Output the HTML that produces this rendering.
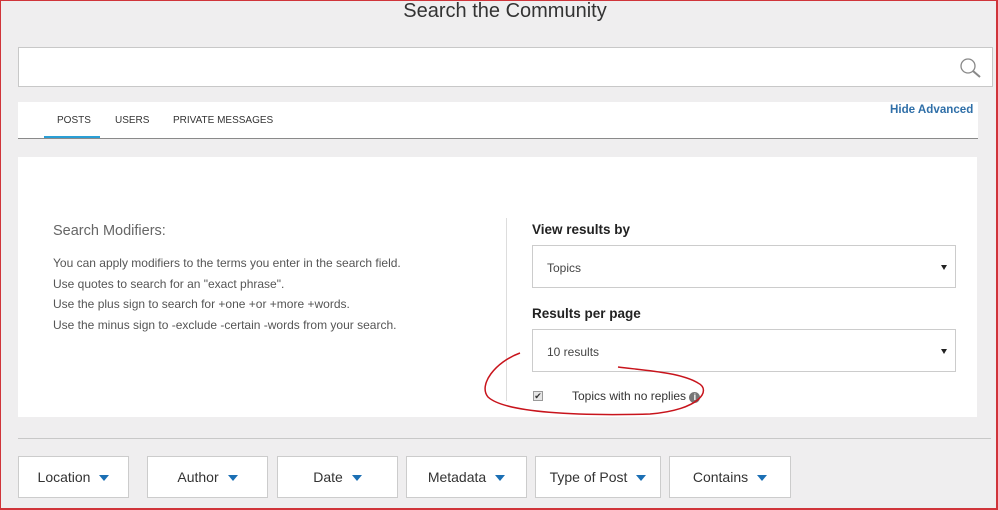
<!DOCTYPE html>
<html><head><style>
*{margin:0;padding:0;box-sizing:border-box}
body{width:998px;height:510px;background:#efeeef;font-family:"Liberation Sans",sans-serif;position:relative;overflow:hidden;color:#333}
.frame{position:absolute;left:0;top:0;width:998px;height:510px;border:1px solid #d0343a;border-bottom-width:2px;border-right-width:2px;z-index:5;pointer-events:none}
.abs{position:absolute}
h1{position:absolute;left:0;width:1010px;top:0;text-align:center;font-size:20px;font-weight:normal;color:#333}
.search{left:18px;top:47px;width:975px;height:40px;background:#fff;border:1px solid #c8c8c8}
.tabs{left:18px;top:102px;width:960px;height:37px;background:#fff;border-bottom:1px solid #8a8a8a}
.tab{position:absolute;top:13px;font-size:10px;color:#333}
.main{left:18px;top:157px;width:959px;height:260px;background:#fff}
.sel{position:absolute;left:514px;width:424px;height:43px;border:1px solid #ccc;font-size:12px;padding:15px 0 0 14px;color:#444}
.sel:after{content:"";position:absolute;right:8px;top:19px;border:3.5px solid transparent;border-top:5px solid #222}
.lbl{position:absolute;left:514px;font-size:13.5px;font-weight:bold;color:#222}
.btn{position:absolute;top:456px;height:42px;background:#fff;border:1px solid #ccc;font-size:14px;color:#333;text-align:center;line-height:40px}
.btn i{display:inline-block;margin-left:9px;border:5px solid transparent;border-top:6px solid #1b6fb4;vertical-align:-4px}
.mod{position:absolute;left:35px;font-size:12px;color:#555}
</style></head><body>
<div class="frame"></div>
<h1>Search the Community</h1>
<div class="abs search">
<svg class="abs" style="left:940px;top:9px" width="24" height="22" viewBox="0 0 24 22"><circle cx="9" cy="9" r="7" fill="none" stroke="#888" stroke-width="1.3"/><path d="M14 14 L21 20" stroke="#888" stroke-width="2"/></svg>
</div>
<div class="abs tabs">
<span class="tab" style="left:39px">POSTS</span>
<div class="abs" style="left:26px;top:34px;width:56px;height:2px;background:#2a9fd6"></div>
<span class="tab" style="left:97px">USERS</span>
<span class="tab" style="left:155px">PRIVATE MESSAGES</span>
<span class="abs" style="left:872px;top:1px;font-size:11.6px;font-weight:bold;color:#2f6fa8">Hide Advanced</span>
</div>
<div class="abs main">
<div class="abs" style="left:35px;top:66px;font-size:14.5px;color:#666">Search Modifiers:</div>
<div class="mod" style="top:99px">You can apply modifiers to the terms you enter in the search field.</div>
<div class="mod" style="top:120px">Use quotes to search for an "exact phrase".</div>
<div class="mod" style="top:140px">Use the plus sign to search for +one +or +more +words.</div>
<div class="mod" style="top:161px">Use the minus sign to -exclude -certain -words from your search.</div>
<div class="abs" style="left:488px;top:61px;width:1px;height:183px;background:#ddd"></div>
<div class="lbl" style="top:65px">View results by</div>
<div class="sel" style="top:88px">Topics</div>
<div class="lbl" style="top:149px">Results per page</div>
<div class="sel" style="top:172px">10 results</div>
<div class="abs" style="left:515px;top:234px;width:10px;height:10px;border:1px solid #999;background:#e6e6e6;font-size:9px;line-height:8px;text-align:center">✔</div>
<div class="abs" style="left:554px;top:232px;font-size:12px;color:#333">Topics with no replies <span style="display:inline-block;width:11px;height:11px;border-radius:50%;background:#777;color:#fff;font-size:9px;line-height:11px;text-align:center;font-weight:bold">i</span></div>
</div>
<div class="abs" style="left:18px;top:438px;width:973px;height:1px;background:#c8c8c8"></div>
<div class="btn" style="left:18px;width:111px">Location<i></i></div>
<div class="btn" style="left:147px;width:121px">Author<i></i></div>
<div class="btn" style="left:277px;width:121px">Date<i></i></div>
<div class="btn" style="left:406px;width:121px">Metadata<i></i></div>
<div class="btn" style="left:535px;width:126px">Type of Post<i></i></div>
<div class="btn" style="left:669px;width:122px">Contains<i></i></div>
<svg class="abs" style="left:0;top:0;z-index:4" width="998" height="510"><path d="M520 353 C495 362 478 385 488 397 C505 413 580 416 650 414 C700 410 712 390 698 383 C680 372 640 370 618 367" fill="none" stroke="#c8141c" stroke-width="1.5"/></svg>
</body></html>
